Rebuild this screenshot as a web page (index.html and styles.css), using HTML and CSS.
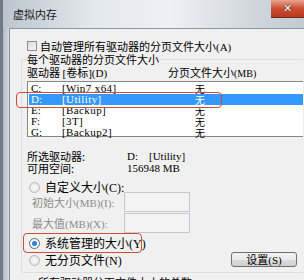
FILE: index.html
```html
<!DOCTYPE html>
<html>
  <head>
    <meta charset='utf-8'/>
    <link rel="stylesheet" href="styles.css">
  </head>
  <body>
    <div class='titlebar'>
      <span class='title'>虚拟内存</span>
      <span class='x-glyph'>✕</span>
    </div>

    <div class='frame'>
      <div class='client'>
        <div class='auto-row'>
          <span class='checkbox'></span>
          <span>自动管理所有驱动器的分页文件大小<span class='latin'>(A)</span></span>
        </div>

        <fieldset class='group'>
          <legend>每个驱动器的分页文件大小</legend>

          <div class='list-head'>
            <span class='col-drive'>驱动器 <span class='latin'>[</span>卷标<span class='latin'>](D)</span></span>
            <span>分页文件大小<span class='latin small'>(MB)</span></span>
          </div>

          <div class='listbox'>
            <div class='item'><span class='letter'>C:</span><span class='label'>[Win7 x64]</span><span class='size'>无</span></div>
            <div class='item selected'><span class='letter'>D:</span><span class='label'>[Utility]</span><span class='size'>无</span></div>
            <div class='item'><span class='letter'>E:</span><span class='label'>[Backup]</span><span class='size'>无</span></div>
            <div class='item'><span class='letter'>F:</span><span class='label'>[3T]</span><span class='size'>无</span></div>
            <div class='item'><span class='letter'>G:</span><span class='label'>[Backup2]</span><span class='size'>无</span></div>
          </div>

          <div class='info'>
            <span>所选驱动器:</span><span class='latin'>D:&nbsp;&nbsp;&nbsp;&nbsp;[Utility]</span>
            <span>可用空间:</span><span class='latin'>156948 MB</span>
          </div>

          <div class='radio-row custom'>
            <span class='radio'></span>
            <span>自定义大小<span class='latin'>(C):</span></span>
          </div>

          <div class='size-row'>
            <span class='size-label'>初始大小<span class='latin'>(MB)(I):</span></span>
            <span class='edit'></span>
          </div>
          <div class='size-row second'>
            <span class='size-label'>最大值<span class='latin'>(MB)(X):</span></span>
            <span class='edit'></span>
          </div>

          <div class='radio-row system'>
            <span class='radio checked'></span>
            <span>系统管理的大小<span class='latin'>(Y)</span></span>
          </div>
          <div class='radio-row none'>
            <span class='radio'></span>
            <span>无分页文件<span class='latin'>(N)</span></span>
            <button class='set-btn'>设置<span class='latin'>(S)</span></button>
          </div>
        </fieldset>

        <div class='total'>所有驱动器分页文件大小的总数</div>
      </div>
    </div>

    <div class='mark mark-drive'></div>
    <div class='mark mark-system'></div>
  </body>
</html>
```

FILE: styles.css
```css
* {
  box-sizing: border-box;
}

body {
  margin: 0;
  font-family: 'Noto Sans CJK SC', 'Liberation Sans', sans-serif;
  font-size: 11px;
  line-height: 12px;
  color: #000;
}

.latin {
  font-family: 'Liberation Serif', 'Noto Sans CJK SC', serif;
}

.small {
  font-size: 10px;
}

.titlebar {
  display: flex;
  align-items: flex-start;
  height: 28px;
  padding-left: 10px;
  border-left: 3px solid #6f7a84;
  background:
    linear-gradient(#6a2c22, #6a2c22) right 0 top 17px / 33px 1px no-repeat,
    linear-gradient(#e9a491, #c9492f 50%, #b5391f) right top / 33px 18px no-repeat,
    linear-gradient(#6a2c22, #6a2c22) right 32px top 0 / 1px 18px no-repeat,
    linear-gradient(to right, #bcc5ce 0%, #e3e8ec 30%, #eef1f4 55%, #cfd5dc 85%, #c3cad2 100%);
}

.title {
  margin-top: 8px;
  color: #1a1a1a;
}

.x-glyph {
  margin-left: auto;
  width: 33px;
  margin-top: 3px;
  text-align: center;
  color: #fff;
  font-family: 'DejaVu Sans', sans-serif;
  font-size: 11px;
  font-weight: bold;
  line-height: 12px;
  text-shadow: 0 0 1px #3b2a2a, 0 0 1px #3b2a2a;
}

.frame {
  height: 252px;
  padding-left: 6px;
  border-left: 3px solid #6f7a84;
  background: linear-gradient(to right, #aeb8c2 0px, #d3d9df 6px);
  overflow: hidden;
}

.client {
  height: 252px;
  background: #f0f0f0;
  border-left: 1px solid #8a97a3;
  border-top: 1px solid #8a97a3;
  padding-left: 17px;
}

.auto-row {
  display: flex;
  align-items: center;
  margin-top: 11px;
  height: 12px;
}

.checkbox {
  width: 10px;
  height: 10px;
  margin-right: 3px;
  border: 1px solid #8e8f8f;
  background: linear-gradient(135deg, #dcdcdc, #f6f6f6);
}

.group {
  margin: 1px 0 0 -6px;
  padding: 0 0 0 5px;
  width: 282px;
  height: 220px;
  border: 1px solid #d5dfe5;
  border-right: none;
  border-radius: 3px 0 0 3px;
}

.group legend {
  padding: 0;
  line-height: 12px;
}

.list-head {
  display: flex;
  margin-top: 1px;
  height: 12px;
}

.col-drive {
  width: 141px;
}

.listbox {
  margin-top: 3px;
  height: 56px;
  border: 1px solid #828790;
  border-right: none;
  background: #fff;
  padding-top: 1px;
  font-family: 'Liberation Serif', serif;
}

.item {
  display: flex;
  height: 11px;
  line-height: 11px;
  padding-left: 2px;
  margin-left: 1px;
}

.item.selected {
  background: #3399ff;
  color: #fff;
}

.letter {
  width: 31px;
}

.label {
  width: 133px;
  letter-spacing: 0.4px;
}

.size {
  font-family: 'Noto Sans CJK SC', sans-serif;
  font-size: 10px;
}

.info {
  display: grid;
  grid-template-columns: 100px auto;
  margin-top: 13px;
  line-height: 12px;
}

.radio-row {
  display: flex;
  align-items: center;
  height: 12px;
}

.radio {
  width: 11px;
  height: 11px;
  margin: 0 5px 0 2px;
  border-radius: 50%;
  border: 1px solid #b8b8b8;
  background: radial-gradient(circle, #f4f4f4 30%, #dadada 100%);
}

.radio.checked {
  border-color: #5b6b7c;
  background: radial-gradient(circle, #2d73c8 0, #4b8fdc 2.4px, #ffffff 3px, #e0e4e8 100%);
}

.custom {
  margin-top: 7px;
  font-size: 12px;
}

.size-row {
  display: flex;
  align-items: center;
  height: 20px;
  margin-top: -1px;
  color: #8d8d8d;
}

.size-row.second {
  margin-top: 1px;
}

.size-label {
  width: 97px;
  padding-left: 5px;
}

.edit {
  width: 66px;
  height: 20px;
  border: 1px solid #c5c8cc;
  background: #f3f3f3;
}

.system {
  margin-top: 3px;
  height: 14px;
  font-size: 12px;
}

.none {
  margin-top: 2px;
  height: 16px;
  width: 270px;
  font-size: 12px;
}

.set-btn {
  align-self: flex-start;
  margin-left: auto;
  width: 66px;
  height: 15px;
  padding: 0;
  font-family: 'Noto Sans CJK SC', sans-serif;
  font-size: 11px;
  line-height: 12px;
  color: #000;
  border: 1px solid #707070;
  border-radius: 3px;
  background: linear-gradient(#f2f2f2 0%, #ebebeb 50%, #dddddd 51%, #cfcfcf 100%);
}

.total {
  margin-top: 3px;
  padding-left: 11px;
}

.mark {
  position: absolute;
  border: 1.5px solid #cd4f35;
  border-radius: 4px;
}

.mark-drive {
  left: 16px;
  top: 92px;
  width: 206px;
  height: 16px;
}

.mark-system {
  left: 23px;
  top: 233px;
  width: 119px;
  height: 20px;
}
```
